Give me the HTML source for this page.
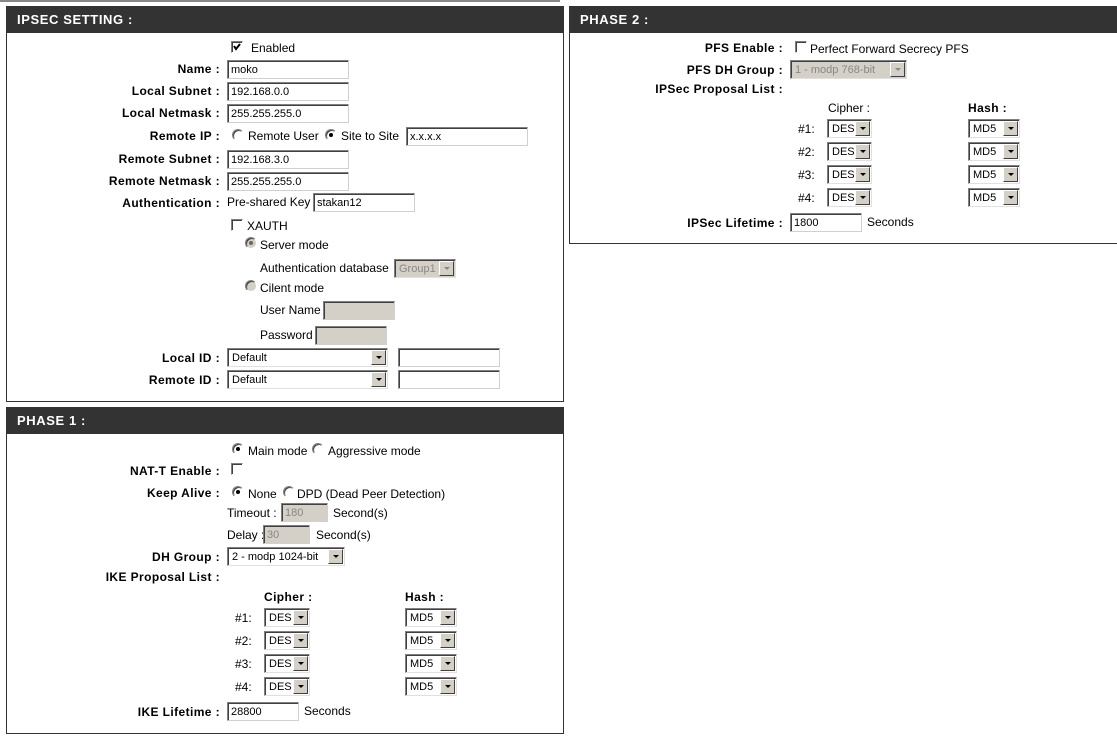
<!DOCTYPE html>
<html><head><meta charset="utf-8"><style>
body{margin:0;width:1117px;height:737px;background:#fff;position:relative;overflow:hidden;font-family:"Liberation Sans",sans-serif;font-size:12px;color:#000}
div,span{position:absolute;box-sizing:border-box}
.box{border:1px solid #333;background:#fff}
.hd{background:#333;color:#fff;font-weight:bold;font-size:13px;letter-spacing:0.6px;line-height:25px;padding-left:10px;left:0;right:0;top:0;height:26px}
.t{white-space:nowrap;line-height:14px;height:14px}
.l{white-space:nowrap;line-height:14px;height:14px;font-weight:bold;text-align:right;letter-spacing:0.4px}
.in{height:19px;border:1px solid;border-color:#808080 #d0d0d0 #d0d0d0 #808080;box-shadow:inset 1px 1px 0 #404040;background:#fff;font-size:11px;line-height:18px;padding-left:3px;white-space:nowrap}
.dis{background:#d4d0c8;color:#888}
.sel{height:19px;border:1px solid;border-color:#808080 #e0e0e0 #e0e0e0 #808080;box-shadow:inset 1px 1px 0 #404040;background:#fff;font-size:11px;line-height:18px;padding-left:4px;white-space:nowrap}
.sel i{position:absolute;right:1px;top:1px;width:15px;height:15px;background:#d4d0c8;border:1px solid;border-color:#fff #404040 #404040 #fff;box-sizing:border-box}
.sel i:after{content:"";position:absolute;left:4px;top:5px;border-left:3px solid transparent;border-right:3px solid transparent;border-top:3px solid #000}
.sel.dis{background:#d4d0c8;color:#888}
.sel.dis i:after{border-top-color:#888}
.cb{width:12px;height:12px;border:1px solid;border-color:#808080 #fff #fff #808080;box-shadow:inset 1px 1px 0 #404040;background:#fff}
.rd{width:12px;height:12px;border-radius:50%;border:1px solid;border-color:#808080 #fff #fff #808080;background:#fff;box-shadow:inset 1px 1px 0 #404040}
.rd.on:after{content:"";position:absolute;left:3px;top:3px;width:4px;height:4px;border-radius:50%;background:#000}
.rd.g{background:#d4d0c8}
.rd.g.on:after{background:#666}
</style></head><body>
<div style="left:0;top:0;width:560px;height:2px;background:#888"></div>

<!-- IPSEC SETTING -->
<div class="box" style="left:6px;top:6px;width:558px;height:396px"><div class="hd">IPSEC SETTING :</div></div>
<div class="cb" style="left:231px;top:41px"><svg width="10" height="10" style="position:absolute;left:0;top:0"><path d="M2 4 L4 7 L8 2" stroke="#000" stroke-width="2" fill="none"/></svg></div>
<div class="t" style="left:251px;top:41px">Enabled</div>
<div class="l" style="right:897px;top:62px">Name :</div><div class="in" style="left:227px;top:60px;width:122px">moko</div>
<div class="l" style="right:897px;top:84px">Local Subnet :</div><div class="in" style="left:227px;top:82px;width:122px">192.168.0.0</div>
<div class="l" style="right:897px;top:106px">Local Netmask :</div><div class="in" style="left:227px;top:104px;width:122px">255.255.255.0</div>
<div class="l" style="right:897px;top:129px">Remote IP :</div>
<div class="rd" style="left:232px;top:129px"></div><div class="t" style="left:248px;top:129px">Remote User</div>
<div class="rd on" style="left:325px;top:129px"></div><div class="t" style="left:341px;top:129px">Site to Site</div>
<div class="in" style="left:406px;top:127px;width:122px">x.x.x.x</div>
<div class="l" style="right:897px;top:152px">Remote Subnet :</div><div class="in" style="left:227px;top:150px;width:122px">192.168.3.0</div>
<div class="l" style="right:897px;top:174px">Remote Netmask :</div><div class="in" style="left:227px;top:172px;width:122px">255.255.255.0</div>
<div class="l" style="right:897px;top:196px">Authentication :</div>
<div class="t" style="left:227px;top:195px">Pre-shared Key</div><div class="in" style="left:313px;top:193px;width:102px">stakan12</div>
<div class="cb" style="left:231px;top:219px"></div><div class="t" style="left:247px;top:219px">XAUTH</div>
<div class="rd g on" style="left:245px;top:237px"></div><div class="t" style="left:260px;top:238px">Server mode</div>
<div class="t" style="left:260px;top:261px">Authentication database</div>
<div class="sel dis" style="left:394px;top:259px;width:62px">Group1<i></i></div>
<div class="rd g" style="left:245px;top:280px"></div><div class="t" style="left:260px;top:281px">Cilent mode</div>
<div class="t" style="left:260px;top:303px">User Name</div><div class="in dis" style="left:323px;top:301px;width:72px"></div>
<div class="t" style="left:260px;top:328px">Password</div><div class="in dis" style="left:315px;top:326px;width:72px"></div>
<div class="l" style="right:897px;top:351px">Local ID :</div><div class="sel" style="left:227px;top:348px;width:161px">Default<i></i></div>
<div class="in" style="left:398px;top:348px;width:102px"></div>
<div class="l" style="right:897px;top:373px">Remote ID :</div><div class="sel" style="left:227px;top:370px;width:161px">Default<i></i></div>
<div class="in" style="left:398px;top:370px;width:102px"></div>

<!-- PHASE 1 -->
<div class="box" style="left:6px;top:407px;width:558px;height:327px"><div class="hd">PHASE 1 :</div></div>
<div class="rd on" style="left:232px;top:443px"></div><div class="t" style="left:248px;top:444px">Main mode</div>
<div class="rd" style="left:312px;top:443px"></div><div class="t" style="left:328px;top:444px">Aggressive mode</div>
<div class="l" style="right:897px;top:464px">NAT-T Enable :</div><div class="cb" style="left:231px;top:463px"></div>
<div class="l" style="right:897px;top:486px">Keep Alive :</div>
<div class="rd on" style="left:232px;top:486px"></div><div class="t" style="left:248px;top:487px">None</div>
<div class="rd" style="left:283px;top:486px"></div><div class="t" style="left:297px;top:487px">DPD (Dead Peer Detection)</div>
<div class="t" style="left:227px;top:506px">Timeout :</div><div class="in dis" style="left:281px;top:503px;width:47px">180</div><div class="t" style="left:333px;top:506px">Second(s)</div>
<div class="t" style="left:227px;top:528px">Delay :</div><div class="in dis" style="left:263px;top:525px;width:47px">30</div><div class="t" style="left:316px;top:528px">Second(s)</div>
<div class="l" style="right:897px;top:550px">DH Group :</div><div class="sel" style="left:227px;top:547px;width:118px">2 - modp 1024-bit<i></i></div>
<div class="l" style="right:897px;top:570px">IKE Proposal List :</div>
<div class="l" style="left:264px;top:590px;text-align:left">Cipher :</div>
<div class="l" style="left:405px;top:590px;text-align:left">Hash :</div>
<div class="t" style="left:235px;top:611px">#1:</div><div class="sel" style="left:264px;top:608px;width:46px">DES<i></i></div><div class="sel" style="left:405px;top:608px;width:52px">MD5<i></i></div>
<div class="t" style="left:235px;top:634px">#2:</div><div class="sel" style="left:264px;top:631px;width:46px">DES<i></i></div><div class="sel" style="left:405px;top:631px;width:52px">MD5<i></i></div>
<div class="t" style="left:235px;top:657px">#3:</div><div class="sel" style="left:264px;top:654px;width:46px">DES<i></i></div><div class="sel" style="left:405px;top:654px;width:52px">MD5<i></i></div>
<div class="t" style="left:235px;top:680px">#4:</div><div class="sel" style="left:264px;top:677px;width:46px">DES<i></i></div><div class="sel" style="left:405px;top:677px;width:52px">MD5<i></i></div>
<div class="l" style="right:897px;top:705px">IKE Lifetime :</div><div class="in" style="left:227px;top:702px;width:72px">28800</div><div class="t" style="left:304px;top:704px">Seconds</div>

<!-- PHASE 2 -->
<div class="box" style="left:569px;top:6px;width:560px;height:238px"><div class="hd">PHASE 2 :</div></div>
<div class="l" style="right:334px;top:41px">PFS Enable :</div>
<div class="cb" style="left:795px;top:41px"></div><div class="t" style="left:810px;top:42px">Perfect Forward Secrecy PFS</div>
<div class="l" style="right:334px;top:63px">PFS DH Group :</div><div class="sel dis" style="left:790px;top:60px;width:117px">1 - modp 768-bit<i></i></div>
<div class="l" style="right:334px;top:82px">IPSec Proposal List :</div>
<div class="t" style="left:828px;top:101px">Cipher :</div>
<div class="l" style="left:968px;top:101px;text-align:left">Hash :</div>
<div class="t" style="left:798px;top:122px">#1:</div><div class="sel" style="left:827px;top:119px;width:45px">DES<i></i></div><div class="sel" style="left:968px;top:119px;width:52px">MD5<i></i></div>
<div class="t" style="left:798px;top:145px">#2:</div><div class="sel" style="left:827px;top:142px;width:45px">DES<i></i></div><div class="sel" style="left:968px;top:142px;width:52px">MD5<i></i></div>
<div class="t" style="left:798px;top:168px">#3:</div><div class="sel" style="left:827px;top:165px;width:45px">DES<i></i></div><div class="sel" style="left:968px;top:165px;width:52px">MD5<i></i></div>
<div class="t" style="left:798px;top:191px">#4:</div><div class="sel" style="left:827px;top:188px;width:45px">DES<i></i></div><div class="sel" style="left:968px;top:188px;width:52px">MD5<i></i></div>
<div class="l" style="right:334px;top:216px">IPSec Lifetime :</div><div class="in" style="left:790px;top:213px;width:72px">1800</div><div class="t" style="left:867px;top:215px">Seconds</div>
</body></html>
